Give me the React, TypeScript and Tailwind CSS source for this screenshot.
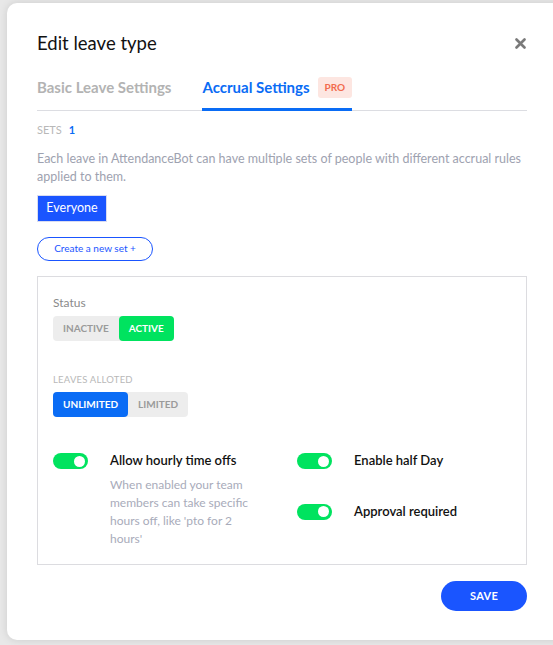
import { useState } from "react";

const FONT = { fontFamily: "Lato, 'Noto Sans', sans-serif" };

function Toggle({ on }: { on: boolean }) {
  return (
    <div
      className={`flex h-[16px] w-[35px] shrink-0 items-center rounded-full px-[3px] ${
        on ? "justify-end bg-[#00e35f]" : "justify-start bg-[#d6d6d6]"
      }`}
    >
      <div className="h-[11px] w-[11px] rounded-full bg-white" />
    </div>
  );
}

function Segmented({
  options,
  value,
  activeCls,
}: {
  options: string[];
  value: string;
  activeCls: string;
}) {
  return (
    <div className="inline-flex rounded-[4px] bg-[#ededed]">
      {options.map((o) => (
        <div
          key={o}
          className={`flex h-[25px] items-center rounded-[4px] px-[10px] text-[10px] font-bold ${
            o === value ? `${activeCls} text-white` : "text-[#9a9a9a]"
          }`}
        >
          {o}
        </div>
      ))}
    </div>
  );
}

export default function App() {
  const [tab] = useState("accrual");

  return (
    <div
      className="relative h-[645px] w-[553px] overflow-hidden bg-[#e8e8e8] pl-[7px] pt-[3px]"
      style={FONT}
    >
      <div className="h-[637px] w-[570px] rounded-[10px] bg-white px-[30px] pt-[27px] shadow-[0_0_8px_rgba(0,0,0,0.12)]">
        {/* Header */}
        <div className="flex w-[490px] items-center justify-between">
          <h1 className="text-[18.5px] text-[#111]">Edit leave type</h1>
          <svg width="11" height="11" viewBox="0 0 11 11" className="mr-[1px]">
            <path d="M1.5 1.5 L9.5 9.5 M9.5 1.5 L1.5 9.5" stroke="#7a7a7a" strokeWidth="2.6" strokeLinecap="round" />
          </svg>
        </div>

        {/* Tabs */}
        <div className="mt-[18px] flex w-[490px] gap-[31px] border-b border-[#dcdde2]">
          <div className="pb-[12px] text-[15px] font-bold text-[#b3b3b3]">Basic Leave Settings</div>
          <div
            className={`-mb-px flex items-center gap-[8px] pb-[9px] ${
              tab === "accrual" ? "border-b-[3px] border-[#0a6cf5]" : ""
            }`}
          >
            <span className="text-[15px] font-bold text-[#0a6cf5]">Accrual Settings</span>
            <span className="rounded-[3px] bg-[#fde6e1] px-[7px] py-[3px] text-[10px] font-bold text-[#f26b4e]">
              PRO
            </span>
          </div>
        </div>

        {/* Sets */}
        <div className="mt-[11px] flex items-center gap-[7px] text-[11px]">
          <span className="text-[#b8b8b8]">SETS</span>
          <span className="font-bold text-[#0a6cf5]">1</span>
        </div>
        <p className="mt-[11px] w-[490px] text-[12.5px] leading-[18px] text-[#9ea2b0]">
          Each leave in AttendanceBot can have multiple sets of people with different accrual rules applied to them.
        </p>
        <button className="mt-[9px] h-[27px] w-[70px] border border-[#d9dcf0] bg-[#1a55ff] text-[12.5px] text-white">
          Everyone
        </button>
        <div>
          <button className="mt-[15px] h-[24px] w-[116px] rounded-full border border-[#1a55ff] text-[10px] text-[#1a55ff]">
            Create a new set +
          </button>
        </div>

        {/* Settings box */}
        <div className="mt-[15px] h-[289px] w-[490px] border border-[#dcdce0] px-[15px] pt-[17px]">
          <div className="text-[12px] text-[#8a8a8a]">Status</div>
          <div className="mt-[2px]">
            <Segmented options={["INACTIVE", "ACTIVE"]} value="ACTIVE" activeCls="bg-[#00e35f]" />
          </div>

          <div className="mt-[32px] text-[9.5px] tracking-[0.2px] text-[#b8b8b8]">LEAVES ALLOTED</div>
          <div className="mt-[3px]">
            <Segmented options={["UNLIMITED", "LIMITED"]} value="UNLIMITED" activeCls="bg-[#0a6cf5]" />
          </div>

          <div className="mt-[36px] flex">
            <div className="flex w-[244px] gap-[22px]">
              <Toggle on />
              <div className="-mt-[2px]">
                <div className="text-[13px] font-semibold text-[#111]">Allow hourly time offs</div>
                <p className="mt-[5px] w-[150px] text-[12px] leading-[18px] text-[#a8abba]">
                  When enabled your team members can take specific hours off, like 'pto for 2 hours'
                </p>
              </div>
            </div>
            <div className="flex flex-col gap-[33px]">
              <div className="flex gap-[22px]">
                <Toggle on />
                <div className="-mt-[2px] text-[13px] font-semibold text-[#111]">Enable half Day</div>
              </div>
              <div className="flex gap-[22px]">
                <Toggle on />
                <div className="-mt-[2px] text-[13px] font-semibold text-[#111]">Approval required</div>
              </div>
            </div>
          </div>
        </div>

        {/* Footer */}
        <div className="mt-[16px] flex w-[490px] justify-end">
          <button className="h-[30px] w-[86px] rounded-full bg-[#1a55ff] text-[11px] font-bold tracking-[0.3px] text-white">
            SAVE
          </button>
        </div>
      </div>
    </div>
  );
}
